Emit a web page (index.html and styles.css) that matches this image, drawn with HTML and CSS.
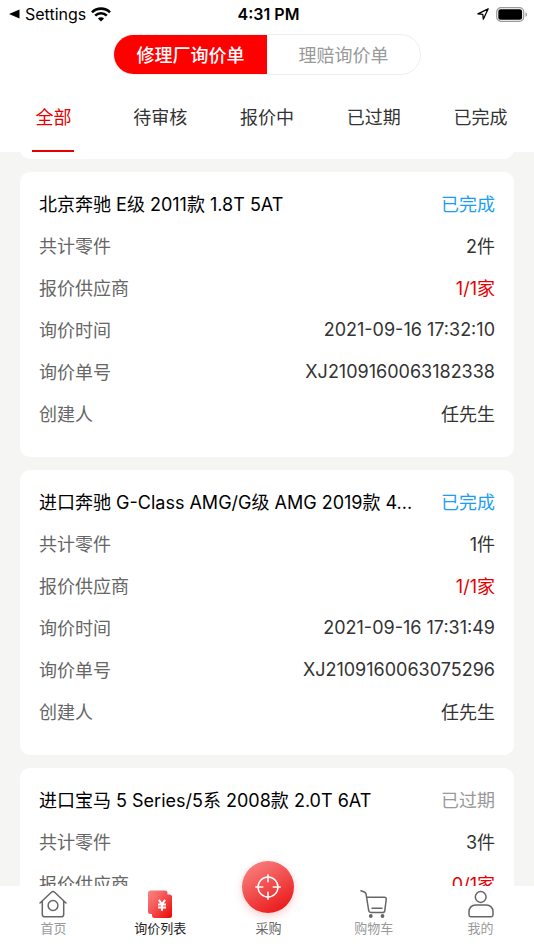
FILE: index.html
```html
<!DOCTYPE html>
<html lang="zh-CN">
<head>
    <meta charset="UTF-8">
    <meta name="viewport" content="width=device-width, initial-scale=1.0">
    <title>询价列表</title>
    <link rel="stylesheet" href="styles.css">
</head>
<body>

    <header class="header">
        <div class="status-bar">
            <div class="status-left">
                <svg width="11" height="10" viewBox="0 0 11 10"><path d="M0 5 10.500 0.500V9.500Z" fill="#000"/></svg>
                <span>Settings</span>
                <svg class="wifi" width="20" height="15" viewBox="0 0 20 15" fill="none" stroke="#000" stroke-width="2.600">
                    <path d="M1 5.300a12.800 12.800 0 0 1 18 0M4.200 8.600a8.200 8.200 0 0 1 11.600 0"/>
                    <path d="M10 14.600 6.900 11.500a4.400 4.400 0 0 1 6.200 0Z" fill="#000" stroke="none"/>
                </svg>
            </div>
            <div class="status-time">4:31 PM</div>
            <div class="status-right">
                <svg width="12" height="12" viewBox="0 0 12 12" fill="none" stroke="#000" stroke-width="1.300" stroke-linejoin="round"><path d="M11.200 0.800 0.900 5.900 5.800 6.300 6.300 11.200Z"/></svg>
                <svg width="32" height="15" viewBox="0 0 32 15">
                    <rect x="0.700" y="0.700" width="27" height="13.600" rx="4.300" fill="none" stroke="#999" stroke-width="1.200"/>
                    <rect x="2.300" y="2.300" width="23.800" height="10.400" rx="2.500" fill="#000"/>
                    <path d="M29.500 5.200c2 .8 2 3.800 0 4.600Z" fill="#999"/>
                </svg>
            </div>
        </div>

        <div class="segment">
            <button class="segment-btn active" type="button">修理厂询价单</button>
            <button class="segment-btn" type="button">理赔询价单</button>
        </div>

        <div class="tabs">
            <button class="tab active" type="button">全部</button>
            <button class="tab" type="button">待审核</button>
            <button class="tab" type="button">报价中</button>
            <button class="tab" type="button">已过期</button>
            <button class="tab" type="button">已完成</button>
        </div>
    </header>

    <main class="list">
        <div class="card card-prev"></div>

        <section class="card">
            <div class="row"><h2 class="title">北京奔驰 E级 2011款 1.8T 5AT</h2><span class="state done">已完成</span></div>
            <div class="row"><span class="label">共计零件</span><span class="value">2件</span></div>
            <div class="row"><span class="label">报价供应商</span><span class="value red">1/1家</span></div>
            <div class="row"><span class="label">询价时间</span><span class="value">2021-09-16 17:32:10</span></div>
            <div class="row"><span class="label">询价单号</span><span class="value">XJ2109160063182338</span></div>
            <div class="row"><span class="label">创建人</span><span class="value">任先生</span></div>
        </section>

        <section class="card">
            <div class="row"><h2 class="title">进口奔驰 G-Class AMG/G级 AMG 2019款 4...</h2><span class="state done">已完成</span></div>
            <div class="row"><span class="label">共计零件</span><span class="value">1件</span></div>
            <div class="row"><span class="label">报价供应商</span><span class="value red">1/1家</span></div>
            <div class="row"><span class="label">询价时间</span><span class="value">2021-09-16 17:31:49</span></div>
            <div class="row"><span class="label">询价单号</span><span class="value">XJ2109160063075296</span></div>
            <div class="row"><span class="label">创建人</span><span class="value">任先生</span></div>
        </section>

        <section class="card">
            <div class="row"><h2 class="title">进口宝马 5 Series/5系 2008款 2.0T 6AT</h2><span class="state">已过期</span></div>
            <div class="row"><span class="label">共计零件</span><span class="value">3件</span></div>
            <div class="row"><span class="label">报价供应商</span><span class="value red">0/1家</span></div>
        </section>
    </main>

    <nav class="nav">
        <a class="nav-item" href="#home">
            <svg width="28" height="28" viewBox="0 0 28 28" fill="none" stroke="#666" stroke-width="1.500" stroke-linecap="round" stroke-linejoin="round">
                <path d="M1 13 12.400 2.200q1.600-1.400 3.200 0L27 13M3.300 11v13.200a2.600 2.600 0 0 0 2.600 2.600h16.200a2.600 2.600 0 0 0 2.600-2.600V11"/>
                <circle cx="14" cy="15.500" r="4.900"/>
            </svg>
            <span>首页</span>
        </a>
        <a class="nav-item active" href="#inquiry">
            <svg width="28" height="28" viewBox="0 0 28 28">
                <defs>
                    <linearGradient id="back" x1="0" y1="0" x2="1" y2="1"><stop offset="0" stop-color="#fa8585"/><stop offset="1" stop-color="#e92a2a"/></linearGradient>
                    <linearGradient id="front" x1="0" y1="0" x2="1" y2="1"><stop offset="0" stop-color="#fb7b7b"/><stop offset="1" stop-color="#eb0505"/></linearGradient>
                </defs>
                <rect x="2" y="0.500" width="19.500" height="23.500" rx="2.500" fill="url(#back)"/>
                <rect x="6" y="4.500" width="20" height="23.500" rx="2.500" fill="url(#front)"/>
                <path d="M12.800 9.800 16 14 19.200 9.800M16 14V20.800M12 14.500h8M12 17.600h8" fill="none" stroke="#fff" stroke-width="2"/>
            </svg>
            <span>询价列表</span>
        </a>
        <a class="nav-item buy" href="#buy">
            <span class="buy-circle">
                <svg width="26" height="26" viewBox="0 0 26 26" fill="none" stroke="#fff" stroke-width="1.500" stroke-linecap="round">
                    <circle cx="13" cy="13" r="10"/>
                    <path d="M13 0.800v7M13 18.200v7M0.800 13h7M18.200 13h7"/>
                </svg>
            </span>
            <span>采购</span>
        </a>
        <a class="nav-item" href="#cart">
            <svg width="28" height="28" viewBox="0 0 28 28" fill="none" stroke="#666" stroke-width="1.500" stroke-linecap="round" stroke-linejoin="round">
                <path d="M1 0.800 4.300 2q1.500.6 1.800 2.200L8.600 20q.4 2.600 2.800 2.600H22.500q2 0 2.300-2L26.200 9.500q.3-2.200-1.900-2.200H6.800M12 18.300h10"/>
                <circle cx="10.800" cy="26" r="1.900" fill="#666" stroke="none"/>
                <circle cx="22.500" cy="26" r="1.900" fill="#666" stroke="none"/>
            </svg>
            <span>购物车</span>
        </a>
        <a class="nav-item" href="#mine">
            <svg width="28" height="28" viewBox="0 0 28 28" fill="none" stroke="#666" stroke-width="1.500">
                <circle cx="13.700" cy="7" r="5.400"/>
                <path d="M2 25V21.500a6.500 6.500 0 0 1 6.500-6.500H19.500a6.500 6.500 0 0 1 6.500 6.500V25a1.700 1.700 0 0 1-1.700 1.700H3.700A1.700 1.700 0 0 1 2 25Z"/>
            </svg>
            <span>我的</span>
        </a>
    </nav>

</body>
</html>
```

FILE: styles.css
```css
* {
    box-sizing: border-box;
}

body {
    margin: 0;
    height: 100vh;
    display: flex;
    flex-direction: column;
    overflow: hidden;
    background: #f5f5f4;
    color: #333;
    font-family: Inter, "Noto Sans CJK SC", sans-serif;
    font-size: 18px;
    font-weight: 400;
}

button {
    border: 0;
    padding: 0;
    background: none;
    font: inherit;
    color: inherit;
}

svg {
    display: block;
}

.header {
    flex: none;
    background: #fff;
}

.status-bar {
    display: grid;
    grid-template-columns: 1fr auto 1fr;
    align-items: center;
    height: 28px;
    padding: 0 6px 0 9px;
    color: #000;
    font-size: 16px;
}

.status-left {
    display: flex;
    align-items: center;
    gap: 5px;
}

.status-time {
    font-weight: 600;
}

.status-right {
    display: flex;
    justify-content: flex-end;
    align-items: center;
    gap: 7px;
}

.segment {
    display: flex;
    width: 308px;
    height: 41px;
    margin: 6px auto 0;
    border: 1px solid #eee;
    border-radius: 21px;
    overflow: hidden;
}

.segment-btn {
    flex: 1;
    padding-bottom: 2px;
    color: #999;
}

.segment-btn.active {
    background: #f00;
    color: #fff;
    font-weight: 500;
}

.tabs {
    display: grid;
    grid-template-columns: repeat(5, 1fr);
    justify-items: center;
    height: 77px;
    padding-top: 8px;
}

.tab {
    padding: 0 3px 1px;
    border-bottom: 2px solid transparent;
}

.tab.active {
    color: #e60000;
    border-bottom-color: #e60000;
}

.list {
    flex: 1;
    min-height: 0;
    overflow: hidden;
    padding: 0 20px;
}

.card {
    margin-bottom: 13px;
    padding: 10px 19px 23px;
    background: #fff;
    border-radius: 10px;
}

/* end of the card that is scrolled under the header */
.card-prev {
    margin-top: -26px;
}

.row {
    display: flex;
    justify-content: space-between;
    align-items: center;
    height: 42px;
}

.title {
    margin: 0;
    color: #000;
    font-size: 18px;
    font-weight: 400;
    white-space: nowrap;
}

.label {
    color: #666;
}

.state {
    color: #999;
}

.state.done {
    color: #1a9df5;
}

.red {
    color: #e60000;
}

.nav {
    flex: none;
    display: grid;
    grid-template-columns: repeat(5, 1fr);
    height: 64px;
    padding-top: 4px;
    background: #fff;
}

.nav-item {
    display: flex;
    flex-direction: column;
    align-items: center;
    color: #999;
    font-size: 13px;
    line-height: 20px;
    text-decoration: none;
}

.nav-item.active {
    color: #222;
}

.nav-item.buy {
    margin-top: -29px;
    padding-left: 3px;
    color: #666;
}

.buy-circle {
    display: flex;
    justify-content: center;
    align-items: center;
    width: 52px;
    height: 52px;
    margin-bottom: 5px;
    border-radius: 50%;
    background: linear-gradient(150deg, #fb8a8a, #e80c0c);
    box-shadow: 0 3px 8px rgba(240, 60, 60, 0.25);
}
```
